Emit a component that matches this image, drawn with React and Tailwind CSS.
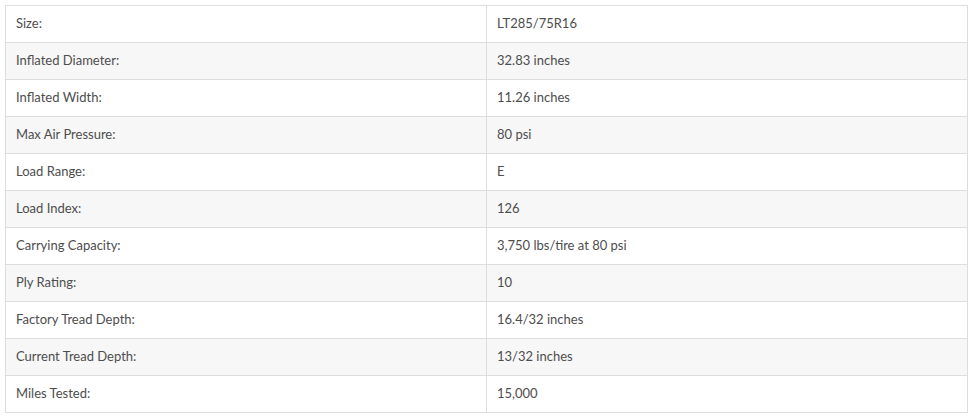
import React from "react";

const rows = [
  ["Size:", "LT285/75R16"],
  ["Inflated Diameter:", "32.83 inches"],
  ["Inflated Width:", "11.26 inches"],
  ["Max Air Pressure:", "80 psi"],
  ["Load Range:", "E"],
  ["Load Index:", "126"],
  ["Carrying Capacity:", "3,750 lbs/tire at 80 psi"],
  ["Ply Rating:", "10"],
  ["Factory Tread Depth:", "16.4/32 inches"],
  ["Current Tread Depth:", "13/32 inches"],
  ["Miles Tested:", "15,000"],
];

export default function App() {
  return (
    <div className="bg-white w-[973px] h-[417px] pt-[5px] pl-[5px]" style={{ fontFamily: "Lato, 'Open Sans', sans-serif" }}>
      <table className="w-[963px] border-collapse text-[13px] text-[#4d4d4d]">
        <tbody>
          {rows.map(([k, v], i) => (
            <tr key={k} className={i % 2 === 1 ? "bg-[#f7f7f7]" : "bg-white"}>
              <td className="w-[481px] h-[37px] border border-[#dddddd] px-[10px] py-0 align-middle">{k}</td>
              <td className="h-[37px] border border-[#dddddd] px-[10px] py-0 align-middle">{v}</td>
            </tr>
          ))}
        </tbody>
      </table>
    </div>
  );
}
